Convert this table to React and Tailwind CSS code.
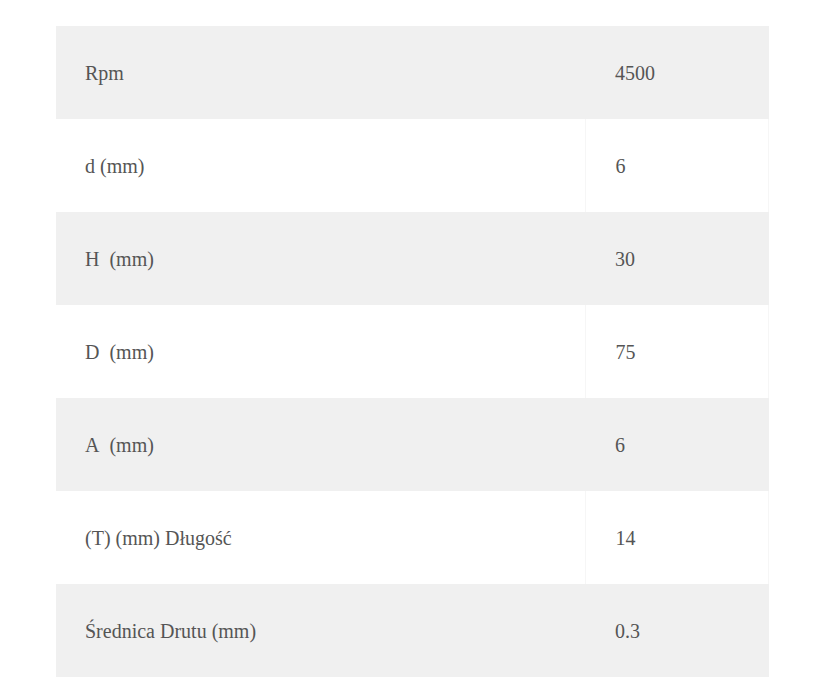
const rows = [
  ["Rpm", "4500"],
  ["d (mm)", "6"],
  ["H\u00a0 (mm)", "30"],
  ["D\u00a0 (mm)", "75"],
  ["A\u00a0 (mm)", "6"],
  ["(T) (mm) Długość", "14"],
  ["Średnica Drutu (mm)", "0.3"],
];

export default function App() {
  return (
    <div className="bg-white min-h-[700px] pt-[26px] pl-[56px] font-['Liberation_Serif',serif]">
      <table className="w-[713px] border-collapse text-[20px] text-[#555555]">
        <tbody>
          {rows.map(([label, value], i) => (
            <tr
              key={label}
              className={i % 2 === 0 ? "bg-[#f0f0f0]" : "bg-white"}
            >
              <td
                className={
                  "h-[93px] w-[529px] pl-[29px] align-middle " +
                  (i % 2 === 0 ? "" : "border-r border-[#f6f6f6]")
                }
              >
                {label}
              </td>
              <td
                className={
                  "h-[93px] pl-[30px] align-middle " +
                  (i % 2 === 0 ? "" : "border-r border-[#f6f6f6]")
                }
              >
                {value}
              </td>
            </tr>
          ))}
        </tbody>
      </table>
    </div>
  );
}
